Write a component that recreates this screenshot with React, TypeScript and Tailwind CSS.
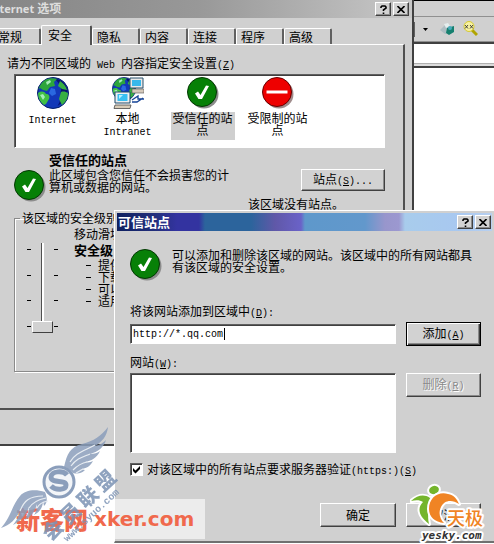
import { ReactNode, useState } from 'react';

const raised =
  'bg-[#d2d2d2] border border-t-white border-l-white border-r-[#404040] border-b-[#404040] shadow-[inset_-1px_-1px_0_#8a8a8a]';
const sunken =
  'bg-white border border-t-[#606060] border-l-[#606060] border-r-white border-b-white shadow-[inset_1px_1px_0_#404040]';

/* Half-width Latin text set beside the Chinese glyphs */
function Latin({ children }: { children: ReactNode }) {
  return (
    <span className="font-['Liberation_Mono',monospace] text-[10px] whitespace-pre">{children}</span>
  );
}

function CheckIcon() {
  return (
    <svg className="h-8 w-8 shrink-0" viewBox="0 0 32 32" aria-hidden="true">
      <circle cx="17" cy="17" r="14.5" fill="#8c8c8c" />
      <circle cx="15" cy="15" r="14.5" fill="#078007" stroke="#043804" strokeWidth="1" />
      <path d="M8 16.500l3-2 2.500 3.500 5.500-9.500 3 .500L15 22h-3.500z" fill="#fff" />
    </svg>
  );
}

function StopIcon() {
  return (
    <svg className="h-8 w-8 shrink-0" viewBox="0 0 32 32" aria-hidden="true">
      <circle cx="17" cy="17" r="14.5" fill="#a08c8c" />
      <circle cx="15" cy="15" r="14.5" fill="#ee0000" stroke="#600" strokeWidth="1" />
      <path d="M4.500 13.500h21v3h-21z" fill="#fff" />
    </svg>
  );
}

function GlobeShape() {
  return (
    <g>
      <circle cx="16" cy="16" r="15.500" fill="#1238b8" stroke="#06206a" />
      <path d="M18 2c7 0 12 6 12.500 12-1 7-5 12-10 15 3-5 4-9 3-14 2-4-1-8-5.500-13z" fill="#08146e" />
      <path d="M8 3c4-2 9-2 12-1l-3 3 1 4-5 1-3 4-4-1-3-2-1.500 1C3 8 5 5 8 3z" fill="#2ca53c" />
      <path d="M1 16c3-2 6-2 8 1 3 0 4 2 3 5l-3 5-2 1c-4-3-6-7-6-12z" fill="#41c044" />
      <path d="M23 4c3 2 6 5 7 9l-5-1-4-3zM24 15c3-1 5 0 7 1 0 5-2 9-6 12l-3-6z" fill="#37b043" />
      <path d="M9 5l4-2 1 2-4 3zM3 18l3-1 2 3-2 3z" fill="#a5ecb8" />
      <path d="M14 11l4 1 1 5-4 2-3-3z" fill="#2a68e0" />
    </g>
  );
}

function GlobeIcon() {
  return (
    <svg className="h-8 w-8" viewBox="0 0 32 32" aria-hidden="true">
      <GlobeShape />
    </svg>
  );
}

function IntranetIcon() {
  return (
    <svg className="h-8 w-8" viewBox="0 0 32 32" aria-hidden="true">
      <g transform="scale(.75)">
        <GlobeShape />
      </g>
      <path d="M18 1h13v10H18z" fill="#e8e8e8" stroke="#28506c" />
      <path d="M20 3h9v6h-9z" fill="#38b8ec" />
      <path d="M20 12h12v4H20z" fill="#d5c9bb" stroke="#505050" strokeWidth=".6" />
      <path d="M3 15h15v11H3z" fill="#efefef" stroke="#1c4868" />
      <path d="M5.500 17h10v7h-10z" fill="#38bff2" />
      <path d="M7 18h4l-4 4z" fill="#b8f0ff" />
      <path d="M3 28h16l-1 3.500H2z" fill="#d8ccb8" stroke="#484848" strokeWidth=".8" />
      <path d="M20 23l6-4v3h6M31 21l-6 4h-5" fill="none" stroke="#164498" strokeWidth="1.300" />
    </svg>
  );
}

function CaptionButtons() {
  return (
    <div className="flex gap-[2px]">
      <button type="button" aria-label="帮助" className={`flex h-[14px] w-4 items-center justify-center ${raised}`}>
        <svg className="h-[9px] w-[7px]" viewBox="0 0 7 9" aria-hidden="true">
          <path d="M1 3V2l1-1h3l1 1v1L3.500 5v1M3.500 7.500V9" fill="none" stroke="#000" strokeWidth="1.600" />
        </svg>
      </button>
      <button type="button" aria-label="关闭" className={`flex h-[14px] w-4 items-center justify-center ${raised}`}>
        <svg className="h-[7px] w-2" viewBox="0 0 8 7" aria-hidden="true">
          <path d="M.5 0l7 7M7.500 0l-7 7" stroke="#000" strokeWidth="1.600" />
        </svg>
      </button>
    </div>
  );
}

function BrowserBackdrop() {
  return (
    <div className="flex flex-col">
      <div className="h-4 border-t border-black bg-[#d0d0d0]" />
      <div className="flex h-[26px] items-center justify-end border-t border-b border-t-[#909090] border-b-[#909090] bg-[#d0d0d0] pr-4">
        <span className="mr-2 h-[15px] w-3 border border-[#606060] bg-white" />
        <svg className="mr-3 h-[3px] w-[5px]" viewBox="0 0 5 3" aria-hidden="true">
          <path d="M0 0h5L2.500 3z" fill="#000" />
        </svg>
        <svg className="mr-2 h-[14px] w-[15px]" viewBox="0 0 15 14" aria-hidden="true">
          <path d="M0 8l5-5 5 1 1 6-6 2z" fill="#aebdc2" />
          <path d="M4 2l4-1 2 3-4 2z" fill="#e5eeee" />
          <path d="M7 6l7-2v6l-5 3-3-2z" fill="#16806f" />
          <circle cx="10" cy="6" r="2" fill="#49aabb" />
        </svg>
        <svg className="h-4 w-[15px]" viewBox="0 0 15 16" aria-hidden="true">
          <path d="M8 8l6 6" stroke="#b0a400" strokeWidth="3" />
          <circle cx="6" cy="5.500" r="5" fill="#f7f1a0" stroke="#d8cb30" />
          <path d="M2 4l3 3.500M5 4L2 7.500M7 4l3 3.500M10 4L7 7.500" stroke="#333" strokeWidth=".9" />
        </svg>
      </div>
      <div className="h-[22px] border-t-2 border-b border-t-[#404040] border-b-[#b0b0b0] bg-white" />
      <div className="h-1 border-b-2 border-b-[#404040] bg-[#dcdcdc]" />
    </div>
  );
}

const tabs = ['常规', '安全', '隐私', '内容', '连接', '程序', '高级'];

const zones = [
  { icon: <GlobeIcon />, label: <Latin>Internet</Latin>, name: 'internet' },
  { icon: <IntranetIcon />, label: <>本地<br /><Latin>Intranet</Latin></>, name: 'intranet' },
  { icon: <CheckIcon />, label: <>受信任的站点</>, name: 'trusted' },
  { icon: <StopIcon />, label: <>受限制的站点</>, name: 'restricted' },
];

const levelNotes = [
  '提供最少的安全措施和警告提示',
  '下载大部分内容且无提示运行',
  '可以运行所有活动内容',
  '适用于您完全信任的站点',
];

function Ticks() {
  return (
    <div className="flex h-[78px] flex-col justify-between" aria-hidden="true">
      {[0, 1, 2, 3].map((n) => (
        <span key={n} className="h-px w-1 bg-black" />
      ))}
    </div>
  );
}

function InternetOptions() {
  const [tab, setTab] = useState('安全');
  const [zone, setZone] = useState('trusted');
  return (
    <section className="absolute top-0 -left-4 w-[430px] border-r-2 border-b-2 border-[#404040] bg-[#d0d0d0] pb-[34px]">
      <header className="flex h-[18px] items-center justify-between bg-linear-to-r from-[#858585] via-[#989898] to-[#c8c8c8] pr-[3px] pl-1">
        <h1 className="font-['Noto_Sans','Noto_Sans_CJK_SC',sans-serif] text-xs font-bold text-[#dedede]">
          <span className="text-[11px]">Internet</span> 选项
        </h1>
        <CaptionButtons />
      </header>

      <div role="tablist" className="flex h-[26px] items-end pl-[9px]">
        {tabs.map((name) => (
          <button
            key={name}
            type="button"
            role="tab"
            aria-selected={name === tab}
            onClick={() => setTab(name)}
            className={
              name === tab
                ? 'z-10 -mb-px h-5 w-[51px] rounded-t-[2px] border-t border-r-2 border-l border-t-white border-r-[#505050] border-l-white bg-[#d0d0d0] pb-[2px] pl-1.5 text-left leading-3'
                : 'h-4 w-12 rounded-t-[2px] border-t border-r-2 border-l border-t-white border-r-[#606060] border-l-white pl-1 text-left leading-3'
            }
          >
            {name}
          </button>
        ))}
      </div>

      <div className="mr-[7px] ml-2 border-t border-r-2 border-b-2 border-t-white border-r-[#505050] border-b-[#505050] pt-3 pr-[18px] pb-9 pl-[22px]">
        <p className="-ml-[7px] h-3">
          请为不同区域的<Latin> Web </Latin>内容指定安全设置<Latin>(<u>Z</u>)</Latin>
        </p>
        <div className={`mt-[5px] flex h-[74px] pt-[2px] ${sunken}`}>
          {zones.map((z) => (
            <button
              key={z.name}
              type="button"
              aria-pressed={z.name === zone}
              onClick={() => setZone(z.name)}
              className="flex w-[75px] flex-col items-center gap-[3px] leading-3"
            >
              {z.icon}
              <span className={z.name === zone ? 'w-16 bg-[#cfcfcf] px-px pb-1' : 'w-16 px-px'}>{z.label}</span>
            </button>
          ))}
        </div>

        <div className="mt-1.5 flex gap-[3px]">
          <div className="pt-4">
            <CheckIcon />
          </div>
          <div className="flex-1">
            <h2 className="text-[13px] leading-3 font-bold">受信任的站点</h2>
            <div className="mt-[3px] flex h-6 items-start justify-between">
              <p className="w-[182px]">此区域包含您信任不会损害您的计算机或数据的网站。</p>
              <button type="button" className={`h-[22px] w-[84px] ${raised}`}>
                站点<Latin>(<u>S</u>)...</Latin>
              </button>
            </div>
            <p className="mt-[5px] pr-[41px] text-right">该区域没有站点。</p>
          </div>
        </div>

        <fieldset className="mt-[2px] h-[160px] border border-[#8a8a8a] shadow-[1px_1px_0_#fff,inset_1px_1px_0_#fff]">
          <legend className="ml-[5px] h-3 px-[2px] leading-3">
            <label htmlFor="level">该区域的安全级别<Latin>(<u>L</u>)</Latin></label>
          </legend>
          <div className="flex pt-[3px] pl-3">
            <div className="flex w-[47px] gap-px pt-4">
              <div className="pt-[6px]"><Ticks /></div>
              <input
                id="level"
                type="range"
                min="0"
                max="3"
                defaultValue="3"
                className="h-[90px] w-[21px] appearance-none bg-[linear-gradient(90deg,#505050_50%,#ffffff_50%)] bg-[length:3px_100%] bg-center bg-no-repeat [writing-mode:vertical-lr] [&::-webkit-slider-thumb]:h-3 [&::-webkit-slider-thumb]:w-[21px] [&::-webkit-slider-thumb]:appearance-none [&::-webkit-slider-thumb]:border [&::-webkit-slider-thumb]:border-t-white [&::-webkit-slider-thumb]:border-r-[#404040] [&::-webkit-slider-thumb]:border-b-[#404040] [&::-webkit-slider-thumb]:border-l-white [&::-webkit-slider-thumb]:bg-[#d2d2d2]"
              />
              <div className="pt-[6px]"><Ticks /></div>
            </div>
            <div className="pt-px">
              <p>移动滑块来设置该区域的安全级别。</p>
              <p className="mt-1 text-[13px] font-bold">安全级 - 低</p>
              <ul className="mt-[3px] pl-3">
                {levelNotes.map((note) => (
                  <li key={note} className="flex items-center gap-[7px]">
                    <span className="h-px w-[5px] bg-black" />
                    {note}
                  </li>
                ))}
              </ul>
            </div>
          </div>
        </fieldset>
      </div>
    </section>
  );
}

function TrustedSites() {
  const [verify, setVerify] = useState(true);
  return (
    <section className="absolute top-[210px] right-0 left-[114px] border-t border-b-2 border-l border-t-white border-b-[#707070] border-l-white bg-[#d0d0d0] px-[2px] pt-[2px]">
      <header className="flex h-[18px] items-center justify-between bg-[linear-gradient(90deg,#0e2060_0px,#24307e_40px,#3333a0_60px,#3333a0_82px,#2c649c_88px,#2c649c_134px,#6058a8_158px,#6a62c8_184px,#5e98cb_188px,#6298cc_248px,#9896cc_268px,#9c98d0_282px,#a8ccec_288px,#a8c8f0_340px,#b8d0f0_100%)] pr-px pl-px">
        <h2 className="text-[13px] font-bold text-white">可信站点</h2>
        <CaptionButtons />
      </header>

      <form className="pt-[18px] pr-[11px] pb-[14px] pl-[13px]" onSubmit={(e) => e.preventDefault()}>
        <div className="flex gap-[10px]">
          <CheckIcon />
          <p className="w-[302px]">
            可以添加和删除该区域的网站。该区域中的所有网站都具有该区域的安全设置。
          </p>
        </div>

        <label htmlFor="site" className="mt-6 block h-3">
          将该网站添加到区域中<Latin>(<u>D</u>):</Latin>
        </label>
        <div className="mt-[5px] grid grid-cols-[1fr_75px] items-center gap-[10px]">
          <div className="relative">
            <input
              id="site"
              type="text"
              defaultValue="http://*.qq.com"
              className={`block h-5 w-full px-[2px] font-['Liberation_Mono',monospace] text-[10px] ${sunken}`}
            />
            <span className="absolute top-1 left-[94px] h-3 w-px bg-black" aria-hidden="true" />
          </div>
          <button type="submit" className="h-6 border border-black bg-[#d2d2d2] shadow-[inset_1px_1px_0_#fff,inset_-1px_-1px_0_#404040,inset_-2px_-2px_0_#8a8a8a]">
            添加<Latin>(<u>A</u>)</Latin>
          </button>
        </div>

        <label htmlFor="sites" className="mt-[10px] block h-3">
          网站<Latin>(<u>W</u>):</Latin>
        </label>
        <div className="mt-[5px] grid grid-cols-[1fr_75px] items-start gap-[10px]">
          <select id="sites" size={4} className={`block h-20 w-full ${sunken}`} />
          <button type="button" disabled className={`h-6 text-[#8a8a8a] text-shadow-[1px_1px_0_#fff] ${raised}`}>
            删除<Latin>(<u>R</u>)</Latin>
          </button>
        </div>

        <label className="mt-[10px] flex h-3 items-center gap-1">
          <span className="relative flex h-[13px] w-[13px]">
            <input
              type="checkbox"
              checked={verify}
              onChange={(e) => setVerify(e.target.checked)}
              className={`peer h-full w-full appearance-none ${sunken}`}
            />
            <svg
              className="pointer-events-none absolute inset-0 hidden h-full w-full peer-checked:block"
              viewBox="0 0 13 13"
              aria-hidden="true"
            >
              <path d="M3 5v3l2.500 2.500L10 6V3L5.500 7.500z" fill="#000" />
            </svg>
          </span>
          <span className="h-3">
            对该区域中的所有站点要求服务器验证<Latin>(https:)(<u>S</u>)</Latin>
          </span>
        </label>

        <div className="mt-7 flex justify-end gap-[10px]">
          <button type="button" className={`h-6 w-[76px] ${raised}`}>确定</button>
          <button type="button" className={`h-6 w-[75px] ${raised}`}>取消</button>
        </div>
      </form>
    </section>
  );
}

function XkerMark() {
  return (
    <div className="absolute top-[499px] left-0 flex h-10 w-[205px] items-center gap-1.5 bg-white/60 pl-4 text-[#f0694d]">
      <span className="text-2xl leading-6 font-black">新客网</span>
      <span className="font-['DejaVu_Sans',sans-serif] text-xl leading-6 font-bold">xker.com</span>
    </div>
  );
}

function WingMark() {
  return (
    <svg className="absolute top-[420px] left-0 h-[124px] w-[130px] overflow-visible" viewBox="0 0 130 124" aria-hidden="true">
      <g fill="#8b9ebb" opacity=".85">
        <path d="M64 47C67 34 70 27 82 24c12-3 19-8 26-17-1 9-6 15-13 19 5-1 8-3 11-6-2 7-8 12-16 14 4 0 8-1 10-3-3 7-9 10-15 11 3 1 6 0 8-1-3 6-8 8-13 8l5 1c-4 4-8 4-12 3-2-2-5-5-9-6z" />
        <path d="M45 72c-10-3-20-2-25 4C12 85 11 97 1 108c9-3 15-9 19-17-1 6-4 10-7 14 8-4 13-10 16-18 0 5-2 9-4 13 7-4 10-9 12-16 0 5-1 8-3 11 6-3 9-8 9-14l1 5c4-4 3-9 1-14z" />
      </g>
      <g stroke="#e8edf2" strokeWidth="1.200" fill="none">
        <path d="M70 42c5-9 14-11 25-17M71 46c6-8 12-9 19-12M73 50c5-5 8-7 14-8M76 53l7-4M43 76c-14 0-19 5-23 15M46 78c-10 2-14 5-17 10M48 81c-6 1-9 3-11 7" />
      </g>
      <circle cx="59" cy="62" r="15" fill="#f3f5f8" stroke="#8b9ebb" strokeWidth="3" />
      <path d="M67 55c-4-5-16-4-16 2 0 7 15 2 15 8 0 5-10 6-15 1" fill="none" stroke="#8b9ebb" strokeWidth="5" />
      <g fill="#7c93b5" opacity=".85">
        <text
          transform="translate(53 110) rotate(-43)"
          x="0 24 48 72"
          y="7"
          textAnchor="middle"
          fontSize="20"
          fontWeight="900"
          fontFamily="Noto Sans CJK SC, sans-serif"
        >
          会员联盟
        </text>
        <text transform="translate(67 122) rotate(-43)" fontSize="10" fontWeight="700" fontFamily="Liberation Mono, monospace">
          www.syuo.com
        </text>
      </g>
    </svg>
  );
}

function YeskyMark() {
  return (
    <svg className="absolute top-[482px] left-[410px] h-[62px] w-[80px]" viewBox="0 0 80 62" aria-hidden="true">
      <g stroke="#fff" strokeWidth="4" strokeLinejoin="round" paintOrder="stroke">
        <path d="M1 19c7-6 13-7 19-3 3 0 7-1 10-3-9 8-14 17-11 29C7 33 8 25 13 20c-3-2-7-2-12-1z" fill="#75b52c" />
        <ellipse cx="24" cy="8" rx="5" ry="4" fill="#75b52c" transform="rotate(-20 24 8)" />
        <path d="M49 22c-7-5-15-4-18 3-3 6-1 12 3 16-9-1-15-6-15-14C19 16 28 9 38 12c6 1 9 5 11 10z" fill="#f08424" />
        <text x="37" y="43" fontSize="18" fontWeight="500" fill="#f08424" fontFamily="Noto Sans CJK SC, sans-serif">天极</text>
        <text x="12" y="57" fontSize="11" fontWeight="700" fontStyle="italic" fill="#333" fontFamily="DejaVu Sans Mono, monospace">yesky.com</text>
      </g>
    </svg>
  );
}

export default function App() {
  return (
    <main className="relative min-h-screen overflow-hidden bg-white font-['Noto_Sans_CJK_SC',sans-serif] text-xs leading-3 text-black">
      <BrowserBackdrop />
      <InternetOptions />
      <TrustedSites />
      <XkerMark />
      <WingMark />
      <YeskyMark />
    </main>
  );
}
